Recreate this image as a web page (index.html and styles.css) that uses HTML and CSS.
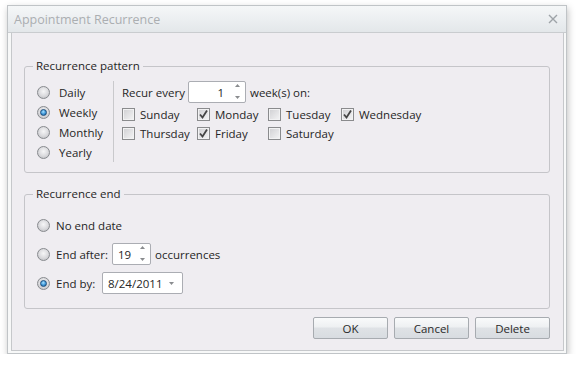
FILE: index.html
```html
<!DOCTYPE html>
<html lang="en">

<head>
    <meta charset="UTF-8">
    <title>Appointment Recurrence</title>
    <link rel="stylesheet" href="styles.css">
</head>

<body>
    <div class="window">
        <!-- Title bar -->
        <div class="titlebar">
            <span class="title">Appointment Recurrence</span>
            <svg class="close" width="10" height="10" viewBox="0 0 10 10">
                <path d="M1 1 L9 9 M9 1 L1 9" stroke="#9ea3a8" stroke-width="1.4" fill="none" />
            </svg>
        </div>

        <div class="client">
            <!-- Recurrence pattern -->
            <fieldset class="group pattern">
                <legend>Recurrence pattern</legend>
                <div class="pattern-body">
                    <div class="kinds">
                        <label class="option"><span class="radio"></span>Daily</label>
                        <label class="option"><span class="radio on"></span>Weekly</label>
                        <label class="option"><span class="radio"></span>Monthly</label>
                        <label class="option"><span class="radio"></span>Yearly</label>
                    </div>
                    <div class="weekly">
                        <div class="recur-row">
                            <span class="recur-label">Recur every</span>
                            <span class="spin spin-count">
                                <span class="spin-value">1</span>
                                <svg class="spin-arrows" width="5" height="20" viewBox="0 0 5 20">
                                    <polygon points="0,5 2.5,2 5,5" fill="#8a8c8f" />
                                    <polygon points="0,14 2.5,17 5,14" fill="#8a8c8f" />
                                </svg>
                            </span>
                            <span class="recur-unit">week(s) on:</span>
                        </div>
                        <div class="days">
                            <label class="day"><span class="check"></span>Sunday</label>
                            <label class="day"><span class="check on"><svg width="11" height="11" viewBox="0 0 11 11"><path d="M2 5.5 L4.5 8.5 L9 1.5" stroke="#454545" stroke-width="1.8" fill="none" /></svg></span>Monday</label>
                            <label class="day"><span class="check"></span>Tuesday</label>
                            <label class="day"><span class="check on"><svg width="11" height="11" viewBox="0 0 11 11"><path d="M2 5.5 L4.5 8.5 L9 1.5" stroke="#454545" stroke-width="1.8" fill="none" /></svg></span>Wednesday</label>
                            <label class="day"><span class="check"></span>Thursday</label>
                            <label class="day"><span class="check on"><svg width="11" height="11" viewBox="0 0 11 11"><path d="M2 5.5 L4.5 8.5 L9 1.5" stroke="#454545" stroke-width="1.8" fill="none" /></svg></span>Friday</label>
                            <label class="day"><span class="check"></span>Saturday</label>
                        </div>
                    </div>
                </div>
            </fieldset>

            <!-- Recurrence end -->
            <fieldset class="group end">
                <legend>Recurrence end</legend>
                <div class="end-body">
                    <label class="end-row"><span class="radio"></span>No end date</label>
                    <div class="end-row">
                        <span class="radio"></span>
                        <span class="end-label after">End after:</span>
                        <span class="spin spin-occ">
                            <span class="spin-value">19</span>
                            <svg class="spin-arrows" width="5" height="20" viewBox="0 0 5 20">
                                <polygon points="0,5 2.5,2 5,5" fill="#8a8c8f" />
                                <polygon points="0,14 2.5,17 5,14" fill="#8a8c8f" />
                            </svg>
                        </span>
                        <span class="end-unit">occurrences</span>
                    </div>
                    <div class="end-row">
                        <span class="radio on"></span>
                        <span class="end-label by">End by:</span>
                        <span class="date">
                            <span>8/24/2011</span>
                            <svg width="5" height="3" viewBox="0 0 5 3">
                                <polygon points="0,0 5,0 2.5,3" fill="#8a8c8f" />
                            </svg>
                        </span>
                    </div>
                </div>
            </fieldset>

            <!-- Buttons -->
            <div class="actions">
                <button type="button">OK</button>
                <button type="button">Cancel</button>
                <button type="button">Delete</button>
            </div>
        </div>
    </div>
</body>

</html>
```

FILE: styles.css
```css
/* Page */
body {
    margin: 0;
    padding: 5px 0 0 7px;
    background-color: #fff;
    font-family: 'Open Sans', 'Noto Sans', sans-serif;
    font-size: 11.5px;
    color: #262626;
}

/* Dialog window */
.window {
    width: 558px;
    border: 1px solid #c0c4c7;
    background-color: #f7f8f8;
    box-shadow: 1px 3px 7px rgba(0, 0, 0, 0.25);
}

.titlebar {
    height: 26px;
    border-bottom: 1px solid #c9cccf;
    padding: 0 8px 0 6px;
    display: flex;
    align-items: center;
    justify-content: space-between;
    background: linear-gradient(#f5f7f8, #e3e7ea);
}

.title {
    font-size: 12.5px;
    color: #abaeb1;
}

.client {
    margin: 0 2px 2px 3px;
    border: 1px solid #c6c8cb;
    border-top: none;
    background-color: #efedf1;
    padding: 25px 13px 11px 12px;
}

/* Group boxes */
.group {
    margin: 0;
    padding: 7px 12px 10px 8px;
    border: 1px solid #c5c5c9;
    border-radius: 3px;
    min-width: 0;
}

.group legend {
    padding: 0 3px;
    line-height: 16px;
}

.end {
    margin-top: 13px;
    padding-top: 12px;
    padding-bottom: 14px;
}

/* Radio buttons */
.radio {
    flex: none;
    width: 13px;
    height: 13px;
    box-sizing: border-box;
    border: 1px solid #878a8e;
    border-radius: 50%;
    background: radial-gradient(circle at 50% 40%, #f6f6f7 0%, #dcdcdf 50%, #b9babe 100%);
    display: grid;
    place-items: center;
}

.radio.on::after {
    content: "";
    width: 7px;
    height: 7px;
    box-sizing: border-box;
    border: 1px solid #1d4e7c;
    border-radius: 50%;
    background: radial-gradient(circle at 45% 35%, #a6e0ff 0%, #3c95d7 55%, #1b5b95 100%);
}

/* Checkboxes */
.check {
    flex: none;
    width: 13px;
    height: 13px;
    box-sizing: border-box;
    border: 1px solid #8a8b8d;
    background: linear-gradient(135deg, #cfcfd2, #f5f5f6);
    box-shadow: inset 0 0 0 1px #f2f2f3;
    display: grid;
    place-items: center;
}

/* Pattern group */
.pattern-body {
    display: flex;
    margin-left: 4px;
}

.kinds {
    width: 77px;
    box-sizing: border-box;
    border-right: 1px solid #c9c9cc;
    padding-top: 1px;
}

.option {
    height: 20px;
    display: flex;
    align-items: center;
    gap: 9px;
}

.weekly {
    padding-left: 8px;
}

.recur-row {
    height: 22px;
    display: flex;
    align-items: center;
}

.recur-label {
    width: 66px;
}

.recur-unit {
    margin-left: 4px;
}

.days {
    margin-top: 2px;
    display: grid;
    grid-template-columns: 75px 71px 73px auto;
    grid-auto-rows: 19px;
}

.day {
    display: flex;
    align-items: center;
    gap: 5px;
    white-space: nowrap;
}

/* Spin editors */
.spin {
    height: 22px;
    box-sizing: border-box;
    border: 1px solid #abadb3;
    border-radius: 2px;
    background-color: #fff;
    display: flex;
    align-items: center;
}

.spin-arrows {
    flex: none;
    margin-right: 5px;
}

.spin-count {
    width: 58px;
}

.spin-count .spin-value {
    flex: 1;
    text-align: right;
    padding-right: 11px;
}

.spin-occ {
    width: 39px;
}

.spin-occ .spin-value {
    flex: 1;
    padding-left: 5px;
}

/* End group */
.end-body {
    margin-left: 4px;
    display: flex;
    flex-direction: column;
    gap: 7px;
}

.end-row {
    height: 22px;
    display: flex;
    align-items: center;
}

.end-row .radio {
    margin-right: 6px;
}

.end-label.after {
    width: 56px;
}

.end-label.by {
    width: 46px;
}

.end-unit {
    margin-left: 4px;
}

.date {
    width: 81px;
    height: 22px;
    box-sizing: border-box;
    border: 1px solid #abadb3;
    border-radius: 2px;
    background-color: #fff;
    padding: 0 8px 0 5px;
    display: flex;
    align-items: center;
    justify-content: space-between;
}

/* Buttons */
.actions {
    margin-top: 8px;
    display: flex;
    justify-content: flex-end;
    gap: 6px;
}

.actions button {
    width: 75px;
    height: 22px;
    border: 1px solid #a7abb0;
    border-radius: 2px;
    background: linear-gradient(#f9fafb 0%, #eef0f2 45%, #dfe2e6 50%, #d8dce1 100%);
    font-family: inherit;
    font-size: 11.5px;
    color: #2a2a2a;
    padding: 0;
}
```
